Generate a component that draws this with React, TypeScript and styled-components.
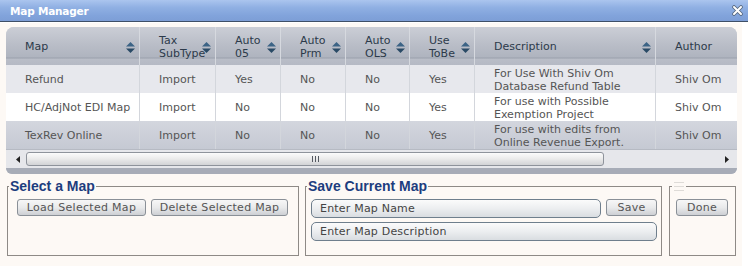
import React from 'react';
import styled, { createGlobalStyle } from 'styled-components';

interface IColumn {
  key: string;
  label: string[];
  width: number;
  sortable: boolean;
}

interface IMapRow {
  map: string;
  sub: string;
  a05: string;
  prm: string;
  ols: string;
  tobe: string;
  desc: string[];
  author: string;
}

const columns: IColumn[] = [
  { key: 'map', label: ['Map'], width: 134, sortable: true },
  { key: 'sub', label: ['Tax', 'SubType'], width: 76, sortable: true },
  { key: 'a05', label: ['Auto', '05'], width: 65, sortable: true },
  { key: 'prm', label: ['Auto', 'Prm'], width: 65, sortable: true },
  { key: 'ols', label: ['Auto', 'OLS'], width: 64, sortable: true },
  { key: 'tobe', label: ['Use', 'ToBe'], width: 65, sortable: true },
  { key: 'desc', label: ['Description'], width: 181, sortable: true },
  { key: 'author', label: ['Author'], width: 81, sortable: false },
];

const rows: IMapRow[] = [
  {
    map: 'Refund', sub: 'Import', a05: 'Yes', prm: 'No', ols: 'No', tobe: 'Yes',
    desc: ['For Use With Shiv Om', 'Database Refund Table'], author: 'Shiv Om',
  },
  {
    map: 'HC/AdjNot EDI Map', sub: 'Import', a05: 'No', prm: 'No', ols: 'No', tobe: 'Yes',
    desc: ['For use with Possible', 'Exemption Project'], author: 'Shiv Om',
  },
  {
    map: 'TexRev Online', sub: 'Import', a05: 'No', prm: 'No', ols: 'No', tobe: 'Yes',
    desc: ['For use with edits from', 'Online Revenue Export.'], author: 'Shiv Om',
  },
];

const gridTemplate = columns.map((c) => `${c.width}px`).join(' ');

const GlobalStyle = createGlobalStyle`
  html, body {
    margin:0;
    padding:0;
    background:#ffffff;
  }
  body {
    font-family:"DejaVu Sans", Verdana, sans-serif;
  }
`;

const Window = styled.div`
  width:748px;
  height:266px;
  display:flex;
  flex-direction:column;
  overflow:hidden;
`;

const TitleBar = styled.div`
  height:21px;
  flex-shrink:0;
  display:flex;
  align-items:center;
  justify-content:space-between;
  padding:0 5px 0 10px;
  background:linear-gradient(180deg, #abc5ee 0%, #90b0e3 35%, #81a3db 75%, #7d9ed6 100%);
  border-bottom:1px solid #3f4f66;
`;

const Title = styled.span`
  color:#ffffff;
  font-family:"DejaVu Sans", Verdana, sans-serif;
  font-weight:bold;
  font-size:10.5px;
  letter-spacing:-0.2px;
`;

const CloseBtn = styled.div`
  width:12px;
  height:12px;
  display:flex;
  align-items:center;
  justify-content:center;
  cursor:pointer;
`;

const Body = styled.div`
  flex:1;
  width:742px;
  box-sizing:border-box;
  background:#fdf9f5;
  border-top:1px solid #ffffff;
  padding:4px 0 0 6px;
`;

const Panel = styled.div`
  width:731px;
  background:#c7cbd4;
  border-radius:8px 8px 6px 6px;
  overflow:hidden;
`;

const GridRow = styled.div`
  display:grid;
  grid-template-columns:${gridTemplate};
`;

const HeaderCell = styled.div<{ $last?: boolean }>`
  position:relative;
  height:38px;
  box-sizing:border-box;
  padding:1px 0 0 19px;
  display:flex;
  flex-direction:column;
  justify-content:center;
  background:linear-gradient(180deg, #cbced6 0px, #b9bdc7 18px, #afb4bf 30px, #9aa0ac 31px, #b9bdc7 32px, #b5b9c4 38px);
  border-right:${(p) => (p.$last ? 'none' : '1px solid #d6d9df')};
  color:#2c3a4a;
  font-size:11px;
  line-height:13px;
`;

const SortIcon = styled.svg`
  position:absolute;
  right:4px;
  top:15px;
`;

const Cell = styled.div<{ $last?: boolean }>`
  height:28px;
  box-sizing:border-box;
  padding:1px 0 0 19px;
  display:flex;
  flex-direction:column;
  justify-content:center;
  border-right:${(p) => (p.$last ? 'none' : '1px solid #d3d6dc')};
  color:#555555;
  font-size:11px;
  line-height:13px;
  white-space:nowrap;
`;

const DataRow = styled(GridRow)<{ $tone: 'light' | 'white' | 'selected' }>`
  background:${(p) => {
    if (p.$tone === 'white') return '#ffffff';
    if (p.$tone === 'selected') return 'linear-gradient(180deg, #d3d6de 0%, #c5c9d3 100%)';
    return '#e7e8ed';
  }};
`;

const ScrollArea = styled.div`
  height:19px;
  box-sizing:border-box;
  display:flex;
  align-items:center;
  background:#e6e7eb;
  border-top:1px solid #b6bac3;
  padding:0 2px 0 4px;
`;

const ScrollArrow = styled.div`
  width:16px;
  height:14px;
  display:flex;
  align-items:center;
  justify-content:center;
  flex-shrink:0;
`;

const Track = styled.div`
  flex:1;
  height:14px;
  display:flex;
`;

const Thumb = styled.div`
  width:578px;
  height:14px;
  box-sizing:border-box;
  border:1px solid #8e939b;
  border-radius:3px;
  background:linear-gradient(180deg, #fbfbfb 0%, #ececec 45%, #d2d3d6 100%);
  display:flex;
  align-items:center;
  justify-content:center;
  gap:2px;
`;

const Grip = styled.span`
  width:1px;
  height:6px;
  background:#555a62;
`;

const PanelFoot = styled.div`
  height:6px;
  background:#a7acb7;
`;

const BottomRow = styled.div`
  display:flex;
  gap:6px;
  margin:4px 0 0 1px;
`;

const Group = styled.fieldset<{ $width: number; $shift?: number }>`
  width:${(p) => p.$width}px;
  height:78px;
  box-sizing:border-box;
  margin:0 0 0 ${(p) => p.$shift ?? 0}px;
  padding:0;
  border:1px solid #8e8a86;
`;

const GroupBody = styled.div<{ $padLeft: number }>`
  display:flex;
  flex-direction:column;
  gap:4px;
  padding:5px 0 0 ${(p) => p.$padLeft}px;
`;

const GroupTitle = styled.legend`
  padding:0 1px;
  margin-left:1px;
  font-family:"Liberation Sans", Arial, sans-serif;
  font-weight:bold;
  font-size:14px;
  line-height:16px;
  color:#1d3d7e;
`;

const IconTitle = styled.legend`
  padding:0 2px;
  margin-left:2px;
  height:16px;
  display:flex;
  align-items:center;
`;

const ButtonRow = styled.div`
  display:flex;
  gap:5px;
`;

const Button = styled.button<{ $width: number }>`
  width:${(p) => p.$width}px;
  height:17px;
  padding:0;
  box-sizing:border-box;
  border:1px solid #8a9097;
  border-radius:3px;
  background:linear-gradient(180deg, #f7f7f7 0%, #e9eaeb 50%, #cdd0d4 100%);
  font-family:"DejaVu Sans", Verdana, sans-serif;
  font-size:11px;
  letter-spacing:0.3px;
  color:#555555;
  cursor:pointer;
`;

const TextInput = styled.input<{ $width: number }>`
  width:${(p) => p.$width}px;
  height:19px;
  box-sizing:border-box;
  border:1px solid #6f7f8d;
  border-radius:5px;
  padding:0 0 0 8px;
  background:linear-gradient(180deg, #fbfbfb 0%, #eceef0 50%, #d9dde1 100%);
  font-family:"DejaVu Sans", Verdana, sans-serif;
  font-size:11px;
  letter-spacing:0.2px;
  color:#444444;
  outline:none;
  &::placeholder { color:#444444; }
`;

const SortArrows = () => (
  <SortIcon width="9" height="11" viewBox="0 0 9 11">
    <polygon points="0,4.5 4.5,0 9,4.5" fill="#3c6486" />
    <polygon points="0,6.5 9,6.5 4.5,11" fill="#2a4a66" />
  </SortIcon>
);

const MenuLines = () => (
  <svg width="10" height="9" viewBox="0 0 10 9">
    <rect x="0" y="0" width="10" height="1" fill="#dedbd7" />
    <rect x="0" y="4" width="10" height="1" fill="#dedbd7" />
    <rect x="0" y="8" width="10" height="1" fill="#dedbd7" />
  </svg>
);

const App: React.FC = () => (
  <Window>
    <GlobalStyle />
    <TitleBar>
      <Title>Map Manager</Title>
      <CloseBtn>
        <svg width="11" height="11" viewBox="0 0 11 11">
          <path d="M2 2 L9 9 M9 2 L2 9" stroke="#55667c" strokeWidth="3.6" strokeLinecap="round" />
          <path d="M2 2 L9 9 M9 2 L2 9" stroke="#ffffff" strokeWidth="2" strokeLinecap="round" />
        </svg>
      </CloseBtn>
    </TitleBar>
    <Body>
      <Panel>
        <GridRow>
          {columns.map((c, i) => (
            <HeaderCell key={c.key} $last={i === columns.length - 1}>
              {c.label.map((l) => <span key={l}>{l}</span>)}
              {c.sortable ? <SortArrows /> : null}
            </HeaderCell>
          ))}
        </GridRow>
        {rows.map((r, idx) => (
          <DataRow key={r.map} $tone={idx === 0 ? 'light' : idx === 1 ? 'white' : 'selected'}>
            <Cell>{r.map}</Cell>
            <Cell>{r.sub}</Cell>
            <Cell>{r.a05}</Cell>
            <Cell>{r.prm}</Cell>
            <Cell>{r.ols}</Cell>
            <Cell>{r.tobe}</Cell>
            <Cell>
              {r.desc.map((d) => <span key={d}>{d}</span>)}
            </Cell>
            <Cell $last>{r.author}</Cell>
          </DataRow>
        ))}
        <ScrollArea>
          <ScrollArrow>
            <svg width="4" height="7" viewBox="0 0 4 7"><polygon points="4,0 0,3.5 4,7" fill="#222" /></svg>
          </ScrollArrow>
          <Track>
            <Thumb>
              <Grip />
              <Grip />
              <Grip />
            </Thumb>
          </Track>
          <ScrollArrow>
            <svg width="4" height="7" viewBox="0 0 4 7"><polygon points="0,0 4,3.5 0,7" fill="#222" /></svg>
          </ScrollArrow>
        </ScrollArea>
        <PanelFoot />
      </Panel>
      <BottomRow>
        <Group $width={292}>
          <GroupTitle>Select a Map</GroupTitle>
          <GroupBody $padLeft={9}>
            <ButtonRow>
              <Button $width={129}>Load Selected Map</Button>
              <Button $width={137}>Delete Selected Map</Button>
            </ButtonRow>
          </GroupBody>
        </Group>
        <Group $width={357}>
          <GroupTitle>Save Current Map</GroupTitle>
          <GroupBody $padLeft={5}>
            <ButtonRow>
              <TextInput $width={290} placeholder="Enter Map Name" />
              <Button $width={51}>Save</Button>
            </ButtonRow>
            <TextInput $width={346} placeholder="Enter Map Description" />
          </GroupBody>
        </Group>
        <Group $width={67} $shift={1}>
          <IconTitle><MenuLines /></IconTitle>
          <GroupBody $padLeft={6}>
            <Button $width={52}>Done</Button>
          </GroupBody>
        </Group>
      </BottomRow>
    </Body>
  </Window>
);

export default App;
